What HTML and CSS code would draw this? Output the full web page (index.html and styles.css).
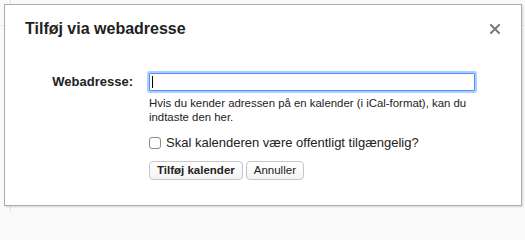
FILE: index.html
```html
<!DOCTYPE html>
<html lang="da">
<head>
<meta charset="utf-8">
<link rel="stylesheet" href="styles.css">
</head>
<body>
<div class="page">
  <div class="dialog">
    <div class="header">
      <h1 class="title">Tilføj via webadresse</h1>
      <span class="close" aria-label="Luk">
        <svg width="10" height="10" viewBox="0 0 10 10"><path d="M1 1 L9 9 M9 1 L1 9" stroke="#7a7a7a" stroke-width="2" stroke-linecap="square"/></svg>
      </span>
    </div>
    <div class="form">
      <label class="label" for="url">Webadresse:</label>
      <div class="field">
        <div class="input" id="url"><span class="caret"></span></div>
        <p class="help">Hvis du kender adressen på en kalender (i iCal-format), kan du indtaste den her.</p>
        <label class="check"><span class="box"></span><span>Skal kalenderen være offentligt tilgængelig?</span></label>
        <div class="buttons">
          <button class="btn primary">Tilføj kalender</button>
          <button class="btn">Annuller</button>
        </div>
      </div>
    </div>
  </div>
</div>
</body>
</html>
```
FILE: styles.css
```css
html, body {
  margin: 0;
  padding: 0;
  width: 525px;
  height: 212px;
  overflow: hidden;
  background: #fafafa;
}
body {
  font-family: "Liberation Sans", Arial, sans-serif;
  color: #222;
}
.page {
  box-sizing: border-box;
  width: 525px;
  height: 212px;
  padding: 4px 0 0 4px;
  background-color: #fafafa;
  background-image:
    linear-gradient(to right, transparent 10px, #e4e4e4 10px, #e4e4e4 11px, transparent 11px),
    linear-gradient(to bottom, transparent 25px, #ececec 25px, #ececec 26px, transparent 26px);
  background-repeat: no-repeat;
}
.dialog {
  box-sizing: border-box;
  width: 518px;
  height: 202px;
  background: #fff;
  border: 1px solid #acacac;
  box-shadow: 1px 1px 2px rgba(0,0,0,0.15);
}
.header {
  display: flex;
  justify-content: space-between;
  align-items: flex-start;
  padding: 14px 20px 0 20px;
}
.title {
  margin: 0;
  font-size: 16px;
  line-height: 20px;
  font-weight: bold;
  color: #222;
}
.close {
  display: block;
  width: 10px;
  height: 10px;
  margin-top: 5px;
  margin-right: 1px;
}
.close svg { display: block; }
.form {
  display: grid;
  grid-template-columns: 128px 1fr;
  column-gap: 16px;
  padding-top: 34px;
}
.label {
  text-align: right;
  font-size: 13px;
  font-weight: bold;
  line-height: 18px;
  color: #222;
}
.field {
  display: flex;
  flex-direction: column;
  align-items: flex-start;
}
.input {
  box-sizing: border-box;
  width: 326px;
  height: 18px;
  border: 1px solid #4d90fe;
  box-shadow: 0 0 0 2px rgba(77,144,254,0.45);
  border-radius: 1px;
  padding: 2px 2px;
  display: flex;
  align-items: center;
}
.caret {
  display: block;
  width: 1px;
  height: 12px;
  background: #000;
}
.help {
  margin: 5px 0 0 0;
  width: 330px;
  font-size: 11.4px;
  line-height: 14px;
  color: #222;
}
.check {
  display: flex;
  align-items: center;
  margin-top: 11px;
  font-size: 13px;
  line-height: 16px;
  color: #222;
}
.box {
  box-sizing: border-box;
  width: 12px;
  height: 12px;
  border: 1px solid #8a8a8a;
  border-radius: 3px;
  background: #fff;
  margin-right: 5px;
}
.buttons {
  display: flex;
  gap: 3px;
  margin-top: 10px;
}
.btn {
  box-sizing: border-box;
  height: 19px;
  padding: 0 7px;
  font-family: "Liberation Sans", Arial, sans-serif;
  font-size: 11.5px;
  line-height: 17px;
  color: #222;
  background: linear-gradient(#ffffff, #f3f3f3);
  border: 1px solid #c6c6c6;
  border-radius: 4px;
}
.btn.primary {
  font-weight: bold;
}
```
